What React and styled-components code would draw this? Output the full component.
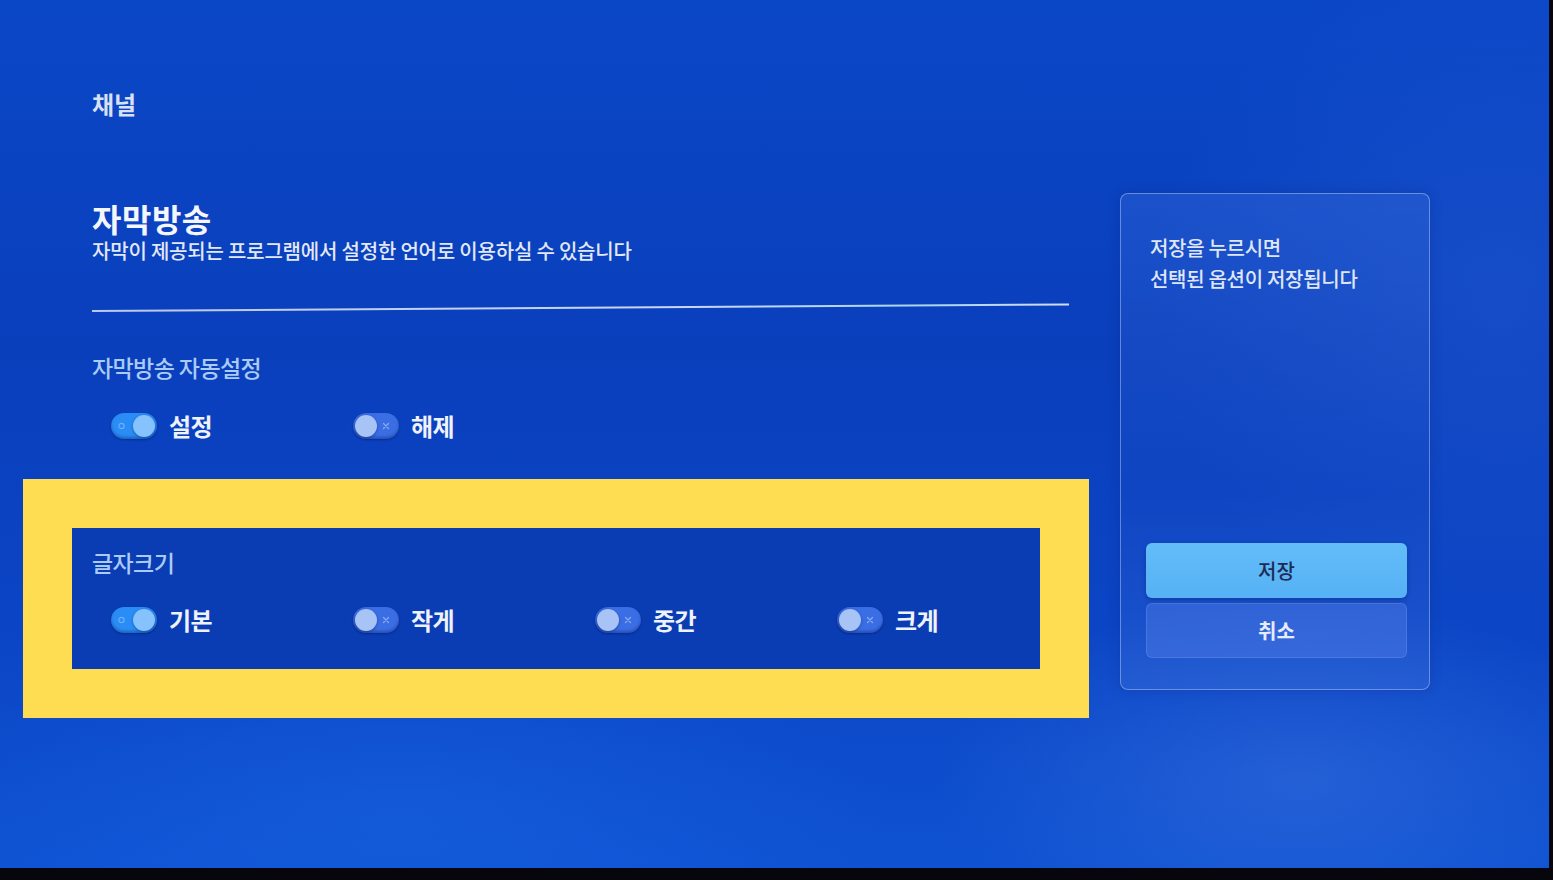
import React from "react";
import styled, { createGlobalStyle } from "styled-components";

const Global = createGlobalStyle`
  html, body { margin: 0; padding: 0; background: #06060c; }
  body { font-family: "Noto Sans CJK KR", "Noto Sans", sans-serif; }
  * { box-sizing: border-box; }
`;

const Screen = styled.div`
  width: 1549px;
  height: 868px;
  overflow: hidden;
  display: flex;
  align-items: flex-start;
  gap: 31px;
  background:
    radial-gradient(ellipse 520px 260px at 1300px 780px, rgba(80, 130, 230, 0.35), transparent 70%),
    radial-gradient(ellipse 700px 300px at 400px 820px, rgba(30, 110, 235, 0.35), transparent 70%),
    radial-gradient(ellipse 500px 500px at 1500px 300px, rgba(40, 95, 215, 0.4), transparent 70%),
    linear-gradient(180deg, #0a47c7 0%, #0a3fbc 40%, #0b44c4 70%, #0e52d2 100%);
  color: #eef2fb;
`;

const LeftColumn = styled.main`
  width: 1066px;
  margin-left: 23px;
  display: flex;
  flex-direction: column;
`;

const Block = styled.div`
  padding-left: 69px;
  display: flex;
  flex-direction: column;
`;

const Breadcrumb = styled.div`
  margin-top: 86px;
  font-size: 24px;
  line-height: 36px;
  font-weight: 700;
  color: #d9e0f2;
`;

const Title = styled.h1`
  margin: 78px 0 0;
  font-size: 32px;
  line-height: 36px;
  font-weight: 700;
  color: #f4f6fc;
  letter-spacing: 0.5px;
`;

const Subtitle = styled.p`
  margin: 1px 0 0;
  font-size: 20px;
  line-height: 28px;
  font-weight: 500;
  color: #e3e8f6;
  letter-spacing: -0.2px;
`;

const Divider = styled.div`
  margin-top: 45px;
  width: 977px;
  height: 2px;
  background: linear-gradient(90deg, #b9c9ef 0%, #c7d6f4 60%, #a9d6ee 85%, #d3dcf5 100%);
  transform: rotate(-0.38deg);
  transform-origin: left center;
`;

const SectionLabel = styled.div`
  margin-top: ${(p) => p.$mt}px;
  font-size: 23px;
  line-height: 30px;
  font-weight: 500;
  color: #a9cbf6;
  letter-spacing: -0.6px;
`;

const OptionRow = styled.div`
  margin-top: ${(p) => p.$mt}px;
  padding-left: 19px;
  display: flex;
  height: 30px;
  align-items: center;
`;

const Option = styled.div`
  flex: none;
  width: 242px;
  display: flex;
  align-items: center;
  gap: 12px;
`;

const Track = styled.div`
  position: relative;
  width: 46px;
  height: 26px;
  border-radius: 13px;
  background: ${(p) => (p.$on ? "#2a8df6" : "#3b6ee4")};
  box-shadow: inset 0 -2px 3px rgba(0, 20, 90, 0.35), 0 1px 2px rgba(0, 20, 80, 0.4);
  flex: none;
`;

const Knob = styled.div`
  position: absolute;
  top: 2px;
  left: ${(p) => (p.$on ? "22px" : "2px")};
  width: 22px;
  height: 22px;
  border-radius: 50%;
  background: ${(p) => (p.$on ? "#86c2fe" : "#a8c3f6")};
  box-shadow: 0 1px 3px rgba(0, 30, 100, 0.45);
`;

const Mark = styled.div`
  position: absolute;
  top: 50%;
  transform: translateY(-50%);
  left: ${(p) => (p.$on ? "7px" : "29px")};
  display: flex;
`;

const OptionLabel = styled.span`
  font-size: 24px;
  line-height: 30px;
  font-weight: 700;
  color: #eef2fb;
  letter-spacing: -0.5px;
`;

const Highlight = styled.section`
  margin-top: 38px;
  border: 49px solid #ffdd52;
  background: #0a3cb3;
  padding: 19px 0 34px 20px;
  display: flex;
  flex-direction: column;
`;

const Panel = styled.aside`
  margin-top: 193px;
  width: 310px;
  height: 497px;
  border: 1px solid rgba(190, 210, 255, 0.45);
  border-radius: 8px;
  background: linear-gradient(180deg, rgba(60, 110, 220, 0.35) 0%, rgba(30, 80, 200, 0.22) 60%, rgba(70, 120, 225, 0.32) 100%);
  box-shadow: 0 0 12px rgba(10, 30, 110, 0.25);
  padding: 38px 22px 31px 25px;
  display: flex;
  flex-direction: column;
  justify-content: space-between;
`;

const PanelText = styled.p`
  margin: 0;
  padding-left: 4px;
  font-size: 20px;
  line-height: 31px;
  font-weight: 500;
  color: #dfe6f6;
  letter-spacing: -0.3px;
`;

const Buttons = styled.div`
  display: flex;
  flex-direction: column;
  gap: 5px;
`;

const Button = styled.button`
  height: 55px;
  border: none;
  border-radius: 6px;
  font-family: inherit;
  font-size: 20px;
  font-weight: ${(p) => (p.$primary ? 500 : 700)};
  color: ${(p) => (p.$primary ? "#1c2c55" : "#e6ecfa")};
  background: ${(p) => (p.$primary ? "linear-gradient(180deg, #63bdf8, #56b1f5)" : "rgba(80, 125, 230, 0.45)")};
  box-shadow: ${(p) => (p.$primary ? "0 2px 4px rgba(0, 30, 100, 0.35)" : "inset 0 0 0 1px rgba(140, 170, 240, 0.25)")};
`;

function Toggle({ on }) {
  return (
    <Track $on={on}>
      <Mark $on={on}>
        {on ? (
          <svg width="7" height="7" viewBox="0 0 7 7">
            <circle cx="3.5" cy="3.5" r="2.6" fill="none" stroke="#6ab0fb" strokeWidth="1.2" />
          </svg>
        ) : (
          <svg width="8" height="8" viewBox="0 0 8 8">
            <path d="M1.5 1.5 L6.5 6.5 M6.5 1.5 L1.5 6.5" stroke="#86aaf2" strokeWidth="1.3" strokeLinecap="round" />
          </svg>
        )}
      </Mark>
      <Knob $on={on} />
    </Track>
  );
}

function Choice({ on, label }) {
  return (
    <Option>
      <Toggle on={on} />
      <OptionLabel>{label}</OptionLabel>
    </Option>
  );
}

export default function App() {
  return (
    <>
      <Global />
      <Screen>
        <LeftColumn>
          <Block>
            <Breadcrumb>채널</Breadcrumb>
            <Title>자막방송</Title>
            <Subtitle>자막이 제공되는 프로그램에서 설정한 언어로 이용하실 수 있습니다</Subtitle>
            <Divider />
            <SectionLabel $mt={40}>자막방송 자동설정</SectionLabel>
          </Block>
          <Block>
            <OptionRow $mt={29}>
              <Choice on label="설정" />
              <Choice label="해제" />
            </OptionRow>
          </Block>
          <Highlight>
            <SectionLabel $mt={0}>글자크기</SectionLabel>
            <OptionRow $mt={28}>
              <Choice on label="기본" />
              <Choice label="작게" />
              <Choice label="중간" />
              <Choice label="크게" />
            </OptionRow>
          </Highlight>
        </LeftColumn>
        <Panel>
          <PanelText>
            저장을 누르시면
            <br />
            선택된 옵션이 저장됩니다
          </PanelText>
          <Buttons>
            <Button $primary>저장</Button>
            <Button>취소</Button>
          </Buttons>
        </Panel>
      </Screen>
    </>
  );
}
